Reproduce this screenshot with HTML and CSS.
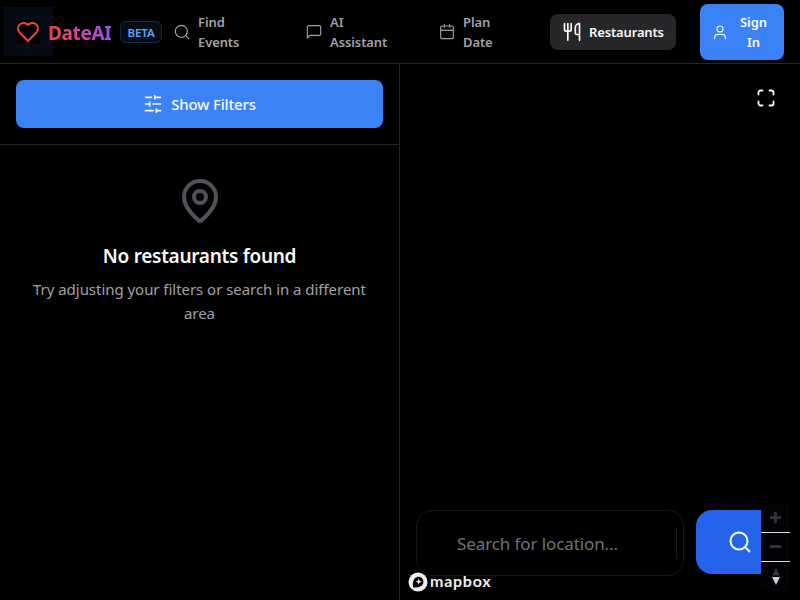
FILE: index.html
```html
<!DOCTYPE html>
<html lang="en">
<head>
<meta charset="utf-8">
<title>DateAI</title>
<link rel="stylesheet" href="styles.css">
</head>
<body>
<header class="header">
  <a class="brand">
    <span class="brand-mark">
      <svg class="icon heart" viewBox="0 0 24 24"><path d="M19 14c1.490-1.460 3-3.210 3-5.500A5.500 5.500 0 0 0 16.500 3c-1.760 0-3 .5-4.500 2-1.500-1.500-2.740-2-4.500-2A5.500 5.500 0 0 0 2 8.500c0 2.300 1.500 4.050 3 5.500l7 7Z"/></svg>
    </span>
    <span class="brand-name">DateAI</span>
  </a>
  <span class="beta">BETA</span>
  <nav class="nav">
    <a class="nav-item"><svg class="icon" viewBox="0 0 24 24"><circle cx="11" cy="11" r="9"/><path d="m22 22-4.500-4.500"/></svg><span class="nav-label">Find<br>Events</span></a>
    <a class="nav-item"><svg class="icon" viewBox="0 0 24 24"><path d="M22 15a2 2 0 0 1-2 2H6l-4 4V4.500a2 2 0 0 1 2-2h16a2 2 0 0 1 2 2z"/></svg><span class="nav-label">AI<br>Assistant</span></a>
    <a class="nav-item"><svg class="icon" viewBox="0 0 24 24"><path d="M8 1v4M16 1v4M2.500 9.500h19"/><rect x="2.500" y="3" width="19" height="19" rx="2"/></svg><span class="nav-label">Plan<br>Date</span></a>
  </nav>
  <a class="nav-active"><svg class="icon fork" viewBox="0 0 24 24"><path d="M3 2v7c0 1.100.900 2 2 2h4a2 2 0 0 0 2-2V2M7 2v20M21 15V2a5 5 0 0 0-5 5v6c0 1.100.900 2 2 2h3Zm0 0v7"/></svg><span>Restaurants</span></a>
  <button class="sign-in"><svg class="icon" viewBox="0 0 24 24"><circle cx="12" cy="7.500" r="4.500"/><path d="M4 22v-2a4.500 4.500 0 0 1 4.500-4.500h7A4.500 4.500 0 0 1 20 20v2"/></svg><span>Sign<br>In</span></button>
</header>
<main class="main">
  <aside class="panel">
    <div class="filters">
      <button class="filter-button"><svg class="icon" viewBox="0 0 24 24"><path d="M21 4h-7M10 4H3M21 12h-9M8 12H3M21 20h-5M12 20H3M14 2v4M8 10v4M16 18v4"/></svg><span>Show Filters</span></button>
    </div>
    <div class="empty">
      <svg class="icon pin" viewBox="0 0 24 24"><path d="M20 10c0 5-5.540 10.190-7.400 11.800a1 1 0 0 1-1.200 0C9.540 20.190 4 15 4 10a8 8 0 0 1 16 0"/><circle cx="12" cy="10" r="3"/></svg>
      <h2 class="empty-title">No restaurants found</h2>
      <p class="empty-text">Try adjusting your filters or search in a different<br>area</p>
    </div>
  </aside>
  <section class="map">
    <button class="fullscreen"><svg class="icon" viewBox="0 0 18 18"><path d="M1.500 5.500V3.500a2 2 0 0 1 2-2h2M12.500 1.500h2a2 2 0 0 1 2 2v2M16.500 12.500v2a2 2 0 0 1-2 2h-2M5.500 16.500h-2a2 2 0 0 1-2-2v-2"/></svg></button>
    <div class="search">
      <div class="search-field"><span class="placeholder">Search for location...</span><span class="divider"></span></div>
      <button class="search-button"><svg class="icon" viewBox="0 0 24 24"><circle cx="11" cy="11" r="8.500"/><path d="m21.500 21.500-4.500-4.500"/></svg></button>
    </div>
    <div class="zoom-controls">
      <button class="zoom-cell"><svg class="glyph" viewBox="0 0 29 29"><path d="M14.500 10v9M10 14.500h9"/></svg></button>
      <button class="zoom-cell"><svg class="glyph" viewBox="0 0 29 29"><path d="M10 13.500h9"/></svg></button>
      <button class="zoom-cell"><svg class="compass" viewBox="0 0 29 29"><path class="north" d="M11 13.500 15 6l4 7.500z"/><path class="south" d="M11 15h8l-4 8z"/></svg></button>
    </div>
    <div class="mapbox"><svg class="mapbox-mark" viewBox="0 0 20 20"><circle class="disc" cx="10" cy="10" r="9.500"/><path class="hole" d="M5 15.200C4.500 11.500 5 8.200 7 6.200c2-2 5.100-2 7 0s2 5 0 7c-2 2-5.300 2.500-9 2z"/><path class="spark" d="m10.700 6.600.900 2.200 2.200.900-2.200.900-.900 2.200-.900-2.200-2.200-.900 2.200-.900z"/></svg><span class="mapbox-name">mapbox</span></div>
  </section>
</main>
</body>
</html>
```
FILE: styles.css
```css
* { box-sizing: border-box; }
body {
  margin: 0;
  width: 800px;
  height: 600px;
  overflow: hidden;
  background: #000;
  color: #fafafa;
  font-family: "Noto Sans", "Open Sans", sans-serif;
}
button { border: 0; padding: 0; color: inherit; font: inherit; letter-spacing: inherit; background: none; }
.icon {
  display: block;
  flex: none;
  width: 16px;
  height: 16px;
  fill: none;
  stroke: currentColor;
  stroke-width: 2;
  stroke-linecap: round;
  stroke-linejoin: round;
}
.header {
  display: flex;
  align-items: center;
  height: 64px;
  border-bottom: 1px solid #27272a;
  font-size: 13px;
  font-weight: 600;
  line-height: 20px;
  letter-spacing: -0.1px;
}
.brand { display: flex; align-items: center; width: 117px; margin-left: 3px; }
.brand-mark {
  display: flex;
  flex: none;
  align-items: center;
  justify-content: center;
  width: 50px;
  height: 49px;
  background: #060b16;
}
.heart { width: 24px; height: 24px; color: #ef4444; background: #000; }
.brand-name {
  margin: 2px 0 0 -5px;
  font-size: 19px;
  font-weight: 700;
  line-height: 28px;
  letter-spacing: -0.35px;
  background: linear-gradient(90deg, #ef4444, #d946a0 50%, #9355f5);
  background-clip: text;
  color: transparent;
}
.beta {
  width: 42px;
  height: 22px;
  padding-top: 1px;
  border: 1px solid #14284a;
  border-radius: 6px;
  background: #060c18;
  color: #60a5fa;
  font-size: 11.5px;
  font-weight: 600;
  text-align: center;
}
.nav { display: grid; grid-template-columns: 132px 133px 110px; margin-left: 12px; color: #a1a1aa; }
.nav-item { display: flex; align-items: center; gap: 8px; }
.nav-item .icon { stroke-width: 1.700; }
.nav-active {
  display: flex;
  align-items: center;
  gap: 7px;
  width: 126px;
  height: 36px;
  margin-left: 1px;
  padding-left: 12px;
  border-radius: 8px;
  background: #27272a;
  letter-spacing: -0.15px;
}
.fork { width: 20px; height: 20px; }
.sign-in {
  display: flex;
  align-items: center;
  gap: 12px;
  width: 84px;
  height: 56px;
  margin-left: 24px;
  padding-left: 12px;
  border-radius: 8px;
  background: #3b82f6;
  text-align: center;
}
.sign-in .icon { stroke-width: 1.700; }
.main { display: grid; grid-template-columns: 400px 400px; height: 536px; }
.panel { border-right: 1px solid #27272a; }
.filters { padding: 16px; border-bottom: 1px solid #27272a; }
.filter-button {
  display: flex;
  align-items: center;
  justify-content: center;
  gap: 8px;
  width: 100%;
  height: 48px;
  border-radius: 8px;
  background: #3b82f6;
  font-size: 15px;
  font-weight: 500;
  letter-spacing: -0.15px;
}
.filter-button .icon { width: 20px; height: 20px; }
.empty { display: flex; flex-direction: column; align-items: center; padding-top: 32px; text-align: center; }
.pin { width: 48px; height: 48px; color: #52525b; }
.empty-title { margin: 17px 0 7px; font-size: 19px; font-weight: 600; line-height: 28px; letter-spacing: -0.28px; }
.empty-text { margin: 0; color: #a1a1aa; font-size: 15px; line-height: 24px; letter-spacing: -0.04px; white-space: nowrap; }
.map { position: relative; display: flex; flex-direction: column; justify-content: space-between; }
.fullscreen { align-self: flex-end; margin: 25px 25px 0 0; }
.fullscreen .icon { width: 18px; height: 18px; stroke-width: 1.800; }
.search { display: flex; gap: 12px; margin: 0 16px 24px; }
.search-field {
  display: flex;
  align-items: center;
  justify-content: space-between;
  width: 268px;
  height: 66px;
  padding: 0 6px 0 40px;
  border: 1px solid #18181b;
  border-radius: 16px;
}
.placeholder { color: #71717a; font-size: 17px; letter-spacing: -0.1px; }
.divider { width: 1px; height: 32px; background: #18181b; }
.search-button {
  display: flex;
  align-items: center;
  width: 65px;
  height: 64px;
  padding-left: 32px;
  border-radius: 16px 0 0 16px;
  background: #2563eb;
}
.search-button .icon { width: 24px; height: 24px; }
.zoom-controls { position: absolute; right: 10px; bottom: 10px; width: 29px; background: #020306; }
.zoom-cell { display: block; width: 29px; height: 29px; }
.zoom-cell + .zoom-cell { border-top: 1px solid #ddd; }
.glyph, .compass { display: block; width: 29px; height: 29px; }
.glyph { fill: none; stroke: #333; stroke-width: 3; stroke-linecap: round; }
.north { fill: #333; }
.south { fill: #ccc; }
.mapbox {
  position: absolute;
  left: 8px;
  bottom: 8px;
  display: flex;
  align-items: center;
  gap: 2px;
  height: 20px;
  color: #eee;
  font-family: Lato, sans-serif;
  font-size: 16px;
  font-weight: 700;
  letter-spacing: 0.75px;
}
.mapbox-name { margin-top: -4px; }
.mapbox-mark { width: 20px; height: 20px; }
.disc, .spark { fill: #eee; }
.hole { fill: #000; }
```
